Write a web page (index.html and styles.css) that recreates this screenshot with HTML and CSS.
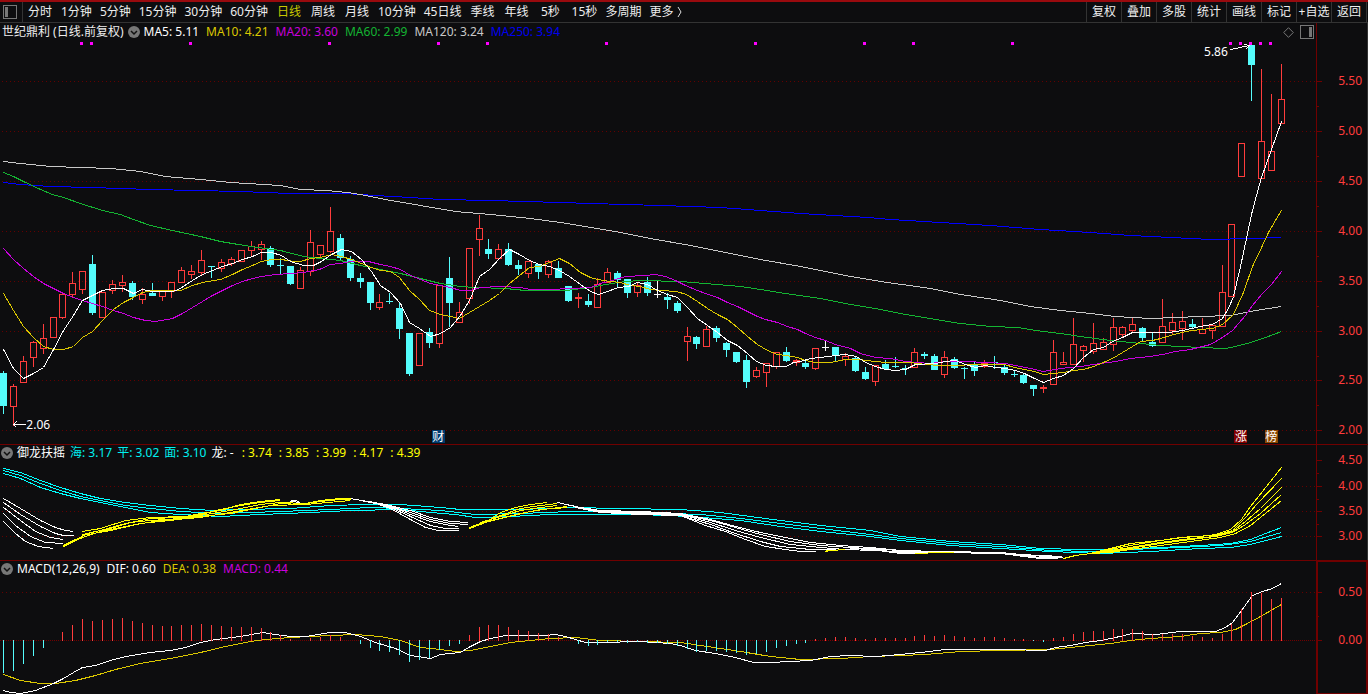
FILE: index.html
```html
<!DOCTYPE html>
<html lang="zh-CN">
<head>
<meta charset="utf-8">
<meta name="viewport" content="width=device-width, initial-scale=1">
<title>世纪鼎利 日线</title>
<link rel="stylesheet" href="styles.css">
</head>
<body>
<header class="toolbar">
  <button class="layout-btn" type="button" aria-label="侧栏"><svg width="14" height="14" viewBox="0 0 14 14"><rect x=".5" y=".5" width="13" height="13" fill="none" stroke="#777"/><rect x="2" y="2" width="3" height="10" fill="#777"/></svg></button>
  <nav class="periods">
    <button type="button">分时</button>
    <button type="button">1分钟</button>
    <button type="button">5分钟</button>
    <button type="button">15分钟</button>
    <button type="button">30分钟</button>
    <button type="button">60分钟</button>
    <button type="button" class="active">日线</button>
    <button type="button">周线</button>
    <button type="button">月线</button>
    <button type="button">10分钟</button>
    <button type="button">45日线</button>
    <button type="button">季线</button>
    <button type="button">年线</button>
    <button type="button">5秒</button>
    <button type="button">15秒</button>
    <button type="button">多周期</button>
    <button type="button" class="more">更多<svg width="6" height="12" viewBox="0 0 6 12"><path d="M1 1L4 6L1 11" fill="none" stroke="#ddd"/></svg></button>
  </nav>
  <div class="actions">
    <button type="button">复权</button>
    <button type="button">叠加</button>
    <button type="button">多股</button>
    <button type="button">统计</button>
    <button type="button">画线</button>
    <button type="button">标记</button>
    <button type="button">+自选</button>
    <button type="button">返回</button>
  </div>
</header>

<main>
  <section class="panel">
    <div class="body">
      <div class="legend legend-main">
        <h1>世纪鼎利 (日线.前复权)</h1>
        <button class="fold" type="button" aria-label="展开"><svg width="12" height="12" viewBox="0 0 12 12"><circle cx="6" cy="6" r="6" fill="#777"/><path d="M3 5L6 8L9 5" fill="none" stroke="#111" stroke-width="1.5"/></svg></button>
        <div class="values">
          <span class="white">MA5: 5.11</span>
          <span class="gold">MA10: 4.21</span>
          <span class="purple">MA20: 3.60</span>
          <span class="green">MA60: 2.99</span>
          <span class="silver">MA120: 3.24</span>
          <span class="blue">MA250: 3.94</span>
        </div>
        <div class="tools">
          <button type="button" aria-label="标注"><svg width="11" height="11" viewBox="0 0 11 11"><path d="M5.5 .7L10.3 5.5L5.5 10.3L.7 5.5Z" fill="none" stroke="#777"/></svg></button>
          <button type="button" aria-label="右侧栏"><svg width="14" height="14" viewBox="0 0 14 14"><rect x=".5" y=".5" width="13" height="13" fill="none" stroke="#777"/><rect x="9" y="2" width="3" height="10" fill="#777"/></svg></button>
        </div>
      </div>
      <div class="plot">
        <svg id="price" class="chart chart-price" viewBox="0 41 1316 403" preserveAspectRatio="none"></svg>
        <span class="note note-low">2.06</span>
        <span class="note note-high">5.86</span>
        <span class="badge badge-report">财</span>
        <span class="badge badge-rise">涨</span>
        <span class="badge badge-rank">榜</span>
      </div>
    </div>
    <div class="axis"><svg id="price-axis" width="50" height="421" viewBox="1317 23 50 421"></svg></div>
  </section>

  <section class="panel">
    <div class="body">
      <div class="legend">
        <button class="fold" type="button" aria-label="展开"><svg width="12" height="12" viewBox="0 0 12 12"><circle cx="6" cy="6" r="6" fill="#777"/><path d="M3 5L6 8L9 5" fill="none" stroke="#111" stroke-width="1.5"/></svg></button>
        <div class="values values-tight">
          <span class="white">御龙扶摇</span>
          <span class="cyan">海: 3.17</span>
          <span class="cyan">平: 3.02</span>
          <span class="cyan">面: 3.10</span>
          <span class="white">龙: -</span>
        </div>
        <div class="values">
          <span class="yellow">: 3.74</span>
          <span class="yellow">: 3.85</span>
          <span class="yellow">: 3.99</span>
          <span class="yellow">: 4.17</span>
          <span class="yellow">: 4.39</span>
        </div>
      </div>
      <svg id="dragon" class="chart chart-dragon" viewBox="0 461 1316 99" preserveAspectRatio="none"></svg>
    </div>
    <div class="axis"><svg id="dragon-axis" width="50" height="115" viewBox="1317 445 50 115"></svg></div>
  </section>

  <section class="panel panel-last">
    <div class="body">
      <div class="legend">
        <button class="fold" type="button" aria-label="展开"><svg width="12" height="12" viewBox="0 0 12 12"><circle cx="6" cy="6" r="6" fill="#777"/><path d="M3 5L6 8L9 5" fill="none" stroke="#111" stroke-width="1.5"/></svg></button>
        <div class="values">
          <span class="white">MACD(12,26,9)</span>
          <span class="white">DIF: 0.60</span>
          <span class="gold">DEA: 0.38</span>
          <span class="purple">MACD: 0.44</span>
        </div>
      </div>
      <svg id="macd" class="chart chart-macd" viewBox="0 577 1316 117" preserveAspectRatio="none"></svg>
    </div>
    <div class="axis axis-focus"><svg id="macd-axis" width="48" height="131" viewBox="1318 562 48 131"></svg></div>
  </section>
</main>
<script src="chart.js"></script>
</body>
</html>
```
FILE: styles.css
```css
* { box-sizing: border-box; }

body {
  margin: 0;
  background: #0d0d0f;
  color: #eee;
  font: 12px/16px "Noto Sans", "Noto Sans CJK SC", sans-serif;
}

button {
  margin: 0;
  padding: 0;
  border: 0;
  background: none;
  color: inherit;
  font: inherit;
  white-space: nowrap;
}

svg { display: block; }

.toolbar {
  display: flex;
  align-items: stretch;
  height: 23px;
  border-top: 2px solid #990a0e;
  border-bottom: 1px solid #333;
}

.layout-btn {
  display: flex;
  align-items: center;
  padding: 0 5px 0 3px;
  border-right: 1px solid #333;
}

.periods {
  display: flex;
  gap: 8px;
  padding-left: 4px;
}

.periods button { min-width: 26px; }
.periods .active { color: #c8c800; }

.periods .more {
  display: flex;
  align-items: center;
  gap: 4px;
}

.actions {
  display: flex;
  margin-left: auto;
  padding-right: 1px;
  border-left: 1px solid #333;
}

.actions button {
  width: 35px;
  border-right: 1px solid #333;
}

.panel {
  display: grid;
  grid-template-columns: minmax(0, 1fr) 52px;
  border-bottom: 1px solid #700000;
}

.panel-last { border-bottom: 0; }

.axis {
  border-left: 1px solid #700000;
  border-right: 1px solid #333;
}

.axis-focus {
  border: 2px solid #700000;
  border-top-width: 1px;
  border-bottom-width: 1px;
}

.axis text {
  fill: #ff3c3c;
  text-anchor: end;
}

.legend {
  display: flex;
  align-items: center;
  gap: 4px;
  height: 16px;
  padding-left: 1px;
  white-space: nowrap;
}

.legend-main {
  height: 18px;
  padding-left: 2px;
}

.legend h1 {
  margin: 0;
  font-size: 12px;
  font-weight: 400;
}

.values {
  display: flex;
  gap: 7px;
}

.values-tight {
  gap: 5px;
  padding-right: 4px;
}

.tools {
  display: flex;
  align-items: center;
  gap: 6px;
  margin-left: auto;
  padding-right: 2px;
}

.white { color: #fff; }
.gold { color: #dcc800; }
.purple { color: #c800dc; }
.green { color: #14b432; }
.silver { color: #c8c8c8; }
.blue { color: #0000f0; }
.cyan { color: #00f0f0; }
.yellow { color: #ffff00; }

.plot { position: relative; }
.chart { width: 100%; }
.chart-price { height: 403px; }
.chart-dragon { height: 99px; }
.chart-macd { height: 117px; }

.chart * {
  shape-rendering: crispEdges;
  vector-effect: non-scaling-stroke;
}

.grid { stroke: #640000; stroke-dasharray: 1 3; }
.grid-zero { stroke: #700000; stroke-dasharray: 1 1; }
.tick { stroke: #700000; shape-rendering: crispEdges; }

/* Labels lying over the price chart, tied to their candles. */
.note, .badge { position: absolute; }
.note { color: #fff; }
.note-low { left: 2%; top: 376px; }
.note-high { right: 6.7%; top: 3px; }

.badge {
  top: 389px;
  width: 13px;
  height: 13px;
  line-height: 13px;
  text-align: center;
  color: #fff;
}

.badge-report { left: 32.8%; background: #003a6e; }
.badge-rise { left: 93.8%; background: #820000; }
.badge-rank { left: 96.1%; background: #8a4600; }
```
FILE: chart.js
```js
const NS = 'http://www.w3.org/2000/svg';
const STEP = 1278 / 129;
const RED = '#ff3c3c', CYAN = '#54fcfc', WHITE = '#ffffff', GOLD = '#dcc800', YELLOW = '#ffff00';

const xAt = i => Math.round(3 + i * STEP);

function add(svg, name, attrs, text) {
  const el = document.createElementNS(NS, name);
  for (const key in attrs) el.setAttribute(key, attrs[key]);
  if (text) el.textContent = text;
  svg.appendChild(el);
}

function curve(svg, color, points) {
  add(svg, 'polyline', { points, fill: 'none', stroke: color, transform: 'translate(.5 .5)' });
}

function grid(svg, rows) {
  rows.forEach(y => add(svg, 'path', { class: 'grid', d: `M2 ${y + 0.5}H1316` }));
}

function axis(id, labels, minor) {
  const svg = document.getElementById(id);
  labels.forEach(([y, text]) => {
    add(svg, 'path', { class: 'tick', d: `M1317 ${y + 0.5}h5` });
    add(svg, 'text', { x: 1362, y: y + 4 }, text);
  });
  minor.forEach(y => add(svg, 'path', { class: 'tick', d: `M1317 ${y + 0.5}h2` }));
}

/* kind, high, body top, body bottom, low: r hollow rise, s flat rise, c fall, w unchanged */
const candles = `c371 373 406 414,r384 386 406 425,r356 361 382 382,r341 342 357 366,r324 338 348 353,r317 317 337 337,r293 294 317 318,r272 283 294 297,r271 271 289 293,c255 264 313 315,
r292 292 317 317,r280 284 290 293,r275 282 285 291,c281 283 297 300,r288 294 299 303,c283 293 296 296,r291 291 296 300,r282 282 291 297,r267 270 282 282,r265 271 274 278,
r250 260 272 274,c266 266 267 278,r259 262 268 271,r257 259 263 265,r250 250 261 261,r241 246 250 255,r241 244 249 259,c246 248 265 267,c258 265 266 274,c266 266 284 285,
r267 270 288 288,r230 242 271 275,r245 245 254 256,r207 231 251 252,c234 238 258 260,c256 259 278 281,c273 278 282 288,c282 282 303 310,r294 302 307 309,c293 301 302 304,
c303 308 329 339,c333 333 374 376,r333 333 365 365,c328 332 343 348,r285 285 343 347,c257 278 303 327,r302 312 322 322,r248 248 298 303,r215 228 239 255,c239 249 254 259,
r244 249 258 258,c243 249 265 266,c260 265 269 275,r261 261 273 277,c264 264 272 279,r260 261 274 277,c261 268 278 278,c286 286 301 302,s293 297 299 308,c294 301 305 307,
r278 284 307 307,r268 272 282 282,c271 273 280 287,c279 279 293 298,r283 285 292 296,c277 282 293 296,w281 294 295 298,c293 297 300 309,c301 303 311 313,r327 336 341 360,
c336 337 344 349,r326 329 346 346,c326 328 338 342,c342 343 350 357,c352 352 362 363,c355 360 382 388,r367 370 376 377,r363 363 372 386,r352 352 366 368,c347 352 361 362,
s359 360 363 366,c361 363 367 369,r348 348 368 369,w340 347 348 351,c347 347 355 361,r353 356 359 365,c356 358 371 372,c367 372 379 380,r365 365 381 385,c360 364 369 369,
c357 366 367 368,c365 368 369 375,r348 352 367 367,c352 354 356 359,c354 356 370 370,r351 357 374 377,c357 359 368 369,c367 368 369 379,c362 365 371 376,s360 362 367 368,
c356 362 363 369,c365 367 373 375,c370 374 375 377,c373 375 383 384,c385 385 389 396,s385 387 389 393,r340 352 384 384,r352 362 364 364,r318 344 364 364,r345 346 350 361,
r323 343 351 353,r338 342 349 349,r318 327 344 350,r326 327 334 337,r317 324 330 332,c327 328 338 342,c332 342 346 347,r299 326 342 342,r313 322 330 333,r311 321 328 339,
c319 324 327 328,r318 329 333 333,r325 325 330 338,r265 292 326 326,r224 224 296 296,r143 143 176 176,c45 45 65 101,r69 141 178 178,r94 151 170 170,r64 99 123 123`.split(',');

const price = document.getElementById('price');
grid(price, [81, 131, 181, 231, 281, 331, 380, 430]);

candles.forEach((entry, i) => {
  const row = entry.trim(), kind = row[0], x = xAt(i);
  const [high, top, bottom, low] = row.slice(1).split(' ').map(Number);
  if (kind === 'r') {
    add(price, 'path', { d: `M${x + 0.5} ${high}V${top}M${x + 0.5} ${bottom + 1}V${low + 1}`, stroke: RED });
    add(price, 'rect', { x: x - 2.5, y: top + 0.5, width: 6, height: Math.max(bottom - top, 2), fill: 'none', stroke: RED });
  } else {
    const fill = { s: RED, c: CYAN, w: WHITE }[kind];
    add(price, 'rect', { x, y: high, width: 1, height: low - high, fill });
    add(price, 'rect', { x: x - 3, y: top, width: 7, height: bottom - top, fill });
  }
});

curve(price, '#0000ff', '3,182 20,184 50,186 90,187 150,189 240,191 290,193 345,193 375,195 410,197 440,199 490,200 560,202 590,203 660,205 720,207 760,210 800,213 868,217 890,219 940,222 990,225 1040,229 1090,232 1130,235 1170,237 1210,239 1250,238 1281,237');
curve(price, '#c8c8c8', '3,161 20,163 50,166 110,168 140,171 165,176 200,179 230,182 280,185 300,189 326,190 347,192 365,195 390,200 420,205 455,211 490,214 530,218 560,222 590,227 620,232 650,238 690,245 720,251 760,259 800,266 830,272 850,276 880,281 930,288 960,294 1000,300 1030,306 1060,310 1090,313 1115,316 1150,318 1175,317 1200,316 1230,315 1255,310 1281,306');
curve(price, '#14b432', '3,172 13,176 23,181 40,189 52,194 63,197 80,203 102,210 120,214 133,219 150,225 172,230 200,236 220,241 250,246 280,250 303,256 320,258 340,260 360,265 380,269 400,273 420,278 440,283 460,286 475,287 505,288 525,290 565,290 590,287 605,284 625,281 640,280 680,281 705,283 740,286 760,289 785,293 820,298 850,304 880,309 905,314 935,319 960,323 990,326 1018,327 1035,330 1060,333 1080,336 1110,340 1140,343 1160,345 1200,347 1225,348 1235,346 1250,342 1265,337 1281,331');
curve(price, '#c800dc', '3,248 13,259 23,268 33,276 43,283 53,288 63,293 73,297 82,300 102,306 113,310 123,313 133,317 145,320 155,321 172,318 182,313 192,307 202,301 212,295 222,290 232,285 242,281 252,278 261,276 275,274 290,273 303,272 319,269 330,264 340,263 350,261 368,261 380,264 390,266 400,269 410,275 420,279 430,283 440,285 450,287 460,290 470,290 480,287 500,286 520,287 530,289 550,289 570,288 590,287 600,283 615,279 625,276 645,275 655,274 665,276 675,280 685,285 697,290 705,293 717,297 727,302 737,306 747,311 757,316 765,319 777,322 787,326 797,329 805,333 815,337 825,340 835,344 850,348 860,353 875,357 890,358 905,361 930,363 945,361 965,361 1005,363 1015,365 1030,368 1043,371 1060,368 1080,366 1100,363 1115,361 1130,358 1150,356 1162,354 1175,351 1190,349 1210,344 1222,337 1232,330 1245,315 1252,305 1262,293 1271,284 1281,271');
curve(price, GOLD, '3,293 13,310 23,326 33,337 43,346 53,349 63,349 73,346 82,337 92,331 102,320 113,309 123,302 133,297 142,292 152,290 180,290 192,285 202,282 220,279 232,274 242,269 252,265 261,261 271,259 281,259 293,261 300,261 310,258 320,257 331,254 341,256 351,259 361,263 371,267 380,270 390,271 399,277 409,290 419,299 429,310 440,314 450,316 459,318 469,312 479,306 489,300 499,293 509,283 519,275 529,267 539,266 549,262 559,258 569,263 580,272 590,277 597,279 610,281 620,282 630,285 640,286 650,289 660,290 676,291 686,294 697,301 707,308 717,314 727,319 737,327 747,336 757,344 767,350 777,354 785,355 797,357 805,360 815,362 830,362 845,359 858,359 875,361 885,362 910,362 925,364 940,365 960,365 970,364 1004,364 1014,367 1024,369 1034,371 1043,374 1053,373 1063,372 1073,370 1083,369 1093,366 1103,362 1112,358 1122,352 1132,346 1140,341 1152,340 1160,338 1170,335 1185,331 1200,329 1212,328 1222,324 1233,314 1243,292 1252,266 1262,245 1268,232 1275,220 1281,210');
curve(price, WHITE, '3,349 13,368 23,378 33,373 43,367 53,349 63,330 73,315 82,300 92,295 102,290 113,288 123,288 133,293 142,289 152,291 172,291 178,289 192,280 202,274 212,270 222,266 232,263 242,259 252,256 261,252 271,252 281,255 290,261 303,265 313,265 321,261 331,254 341,249 351,251 361,259 371,271 380,285 390,292 400,303 409,322 419,328 430,336 440,333 450,327 460,315 470,298 479,276 489,269 499,258 509,249 519,254 529,260 539,264 549,266 559,270 569,276 580,284 590,291 598,294 607,291 618,287 628,286 637,282 647,284 657,290 667,294 677,297 687,307 697,318 707,325 717,332 727,340 737,345 747,353 756,361 766,365 776,366 786,366 793,362 800,361 810,358 820,357 835,355 845,354 856,356 865,362 875,366 885,369 895,370 905,369 915,364 935,363 945,361 955,360 965,364 975,367 985,365 995,367 1005,368 1015,370 1024,373 1034,378 1043,382 1053,378 1063,375 1073,368 1083,357 1093,349 1103,347 1112,341 1122,337 1132,332 1150,332 1168,332 1182,330 1200,326 1212,324 1222,318 1228,308 1233,296 1240,266 1246,238 1251,214 1256,195 1261,177 1271,149 1281,121');

[81, 91, 190, 329, 438, 487, 606, 755, 864, 913, 1012, 1230, 1240, 1250, 1260, 1270]
  .forEach(x => add(price, 'rect', { x: x - 1, y: 42, width: 3, height: 3, fill: '#ff00ff' }));

curve(price, WHITE, '25,424 13,424 16,421');
curve(price, WHITE, '13,424 16,427');
curve(price, WHITE, '1230,49 1249,45 1244,44');
curve(price, WHITE, '1249,45 1245,49');

axis('price-axis', [[81, '5.50'], [131, '5.00'], [181, '4.50'], [231, '4.00'], [281, '3.50'], [331, '3.00'], [380, '2.50'], [430, '2.00']],
  [106, 156, 206, 256, 306, 356, 405]);

const dragon = document.getElementById('dragon');
grid(dragon, [486, 511, 536]);
[
  '3,468 20,472 40,480 60,487 80,493 100,498 125,502 150,505 180,508 212,510 240,509 290,508 330,505 365,504 400,504 440,507 460,509 520,509 570,507 620,508 680,509 720,512 750,516 780,520 820,525 870,530 900,536 950,541 1000,544 1040,548 1080,549 1120,549 1160,547 1200,545 1230,543 1250,539 1265,533 1281,527',
  '3,470 20,475 40,483 60,490 80,496 100,500 125,505 150,508 180,511 220,513 280,511 330,509 370,507 400,508 440,510 475,514 520,513 570,511 640,512 700,514 740,518 780,523 820,528 870,534 900,538 950,543 1000,546 1050,550 1090,551 1130,549 1180,547 1220,545 1250,541 1281,532',
  '3,473 20,478 40,487 60,493 80,498 100,502 125,507 150,512 180,514 220,516 260,514 310,512 350,510 400,509 430,512 455,514 475,517 510,516 550,514 640,514 690,516 740,520 780,526 820,531 870,536 900,540 950,545 1000,548 1050,551 1100,553 1150,551 1200,548 1230,547 1250,544 1281,536'
].forEach(points => curve(dragon, '#00ffff', points));
[
  '3,498 20,508 40,520 55,527 65,530 73,531',
  '3,502 20,514 40,526 55,533 63,535 73,535',
  '3,507 20,520 35,531 50,537 63,539',
  '3,513 15,525 30,536 45,542 63,543',
  '3,521 15,533 25,541 38,546 53,548',
  '290,500 295,500 300,502',
  '290,501 300,502',
  '350,498 385,504 410,510 430,517 450,521 468,522',
  '360,500 390,506 410,512 430,519 450,523 468,524',
  '360,500 390,506 410,514 430,521 450,525 458,526',
  '370,501 390,507 410,516 430,525 445,528 458,528',
  '370,501 390,508 410,519 425,527 438,530 458,530',
  '557,502 580,507 600,510 640,511 680,513 710,519 735,526 760,532 790,538 810,542 840,545 870,547 900,550 940,551 1000,552 1020,554 1062,556',
  '565,504 580,507 600,511 640,512 680,514 710,520 735,527 760,534 790,541 820,545 850,547 900,550 940,552 1000,552 1030,555 1062,557',
  '575,506 600,511 640,513 680,514 710,522 735,530 760,537 790,544 820,547 845,549 900,551 940,552 1000,553 1040,557 1062,557',
  '575,507 600,512 640,513 680,515 710,524 735,533 760,541 780,546 810,549 835,549',
  '575,507 600,512 640,514 680,515 705,525 725,531 745,539 765,546 785,549 800,551 815,551',
  '850,548 870,549 900,552 940,552 1000,553 1040,558 1052,558 1063,557',
  '870,549 900,553 915,553'
].forEach(points => curve(dragon, WHITE, points));
[
  '82,531 100,528 125,520 150,517 185,516 200,513 220,510 240,504 260,501 280,499',
  '82,534 100,530 125,523 150,518 180,517 200,514 220,509 240,505 260,502 280,500',
  '63,545 73,540 90,532 110,528 130,522 150,520 180,518 200,515 230,510 260,504 280,502 305,503 320,500 340,498 350,498',
  '63,546 82,537 100,531 130,525 160,520 200,517 230,512 270,505 305,504 350,500',
  '82,535 110,530 140,523 170,520 200,516 230,513 280,503 300,504 320,501 340,499 350,499',
  '469,528 485,522 500,512 515,507 530,504 547,502',
  '469,527 485,521 500,515 520,508 540,505 557,503',
  '480,522 500,516 520,510 540,507 557,505',
  '480,522 500,518 520,513 540,509 567,507',
  '480,523 500,518 530,511 550,508 567,506',
  '825,551 830,550 845,549',
  '825,550 832,550',
  '915,553 940,552 953,552',
  '1063,558 1075,555 1090,553 1110,548 1130,543 1160,540 1180,537 1200,536 1215,534 1230,529 1241,519 1250,506 1262,491 1281,467',
  '1090,553 1110,549 1130,545 1160,540 1190,536 1215,535 1232,530 1245,517 1256,504 1281,478',
  '1090,553 1110,550 1130,547 1160,542 1190,538 1215,536 1232,531 1245,521 1260,508 1281,487',
  '1090,553 1110,551 1130,548 1160,543 1190,539 1215,536 1232,532 1245,524 1260,513 1281,494',
  '1090,553 1110,552 1130,549 1160,545 1190,541 1220,537 1235,533 1250,525 1281,500'
].forEach(points => curve(dragon, YELLOW, points));

axis('dragon-axis', [[460, '4.50'], [486, '4.00'], [511, '3.50'], [536, '3.00']], [473, 499, 524]);

/* Tip of each histogram bar; 640 is the zero line. */
const bars = [673, 671, 664, 656, 648, 640, 632, 625, 619, 621, 620, 619, 618, 621, 623, 625, 626, 626, 625, 625,
  624, 625, 626, 627, 627, 627, 628, 632, 635, 639, 640, 638, 637, 635, 637, 640, 644, 648, 651, 652,
  655, 662, 660, 658, 650, 646, 644, 635, 627, 625, 625, 627, 630, 631, 633, 634, 637, 640, 644, 646,
  645, 642, 642, 643, 642, 643, 643, 644, 646, 649, 652, 651, 651, 652, 653, 655, 654, 652, 648, 646,
  644, 643, 639, 638, 637, 637, 638, 639, 638, 638, 638, 638, 636, 635, 636, 635, 636, 637, 638, 637,
  637, 638, 639, 639, 641, 642, 638, 637, 634, 632, 631, 631, 629, 629, 629, 631, 634, 634, 634, 634,
  636, 637, 638, 634, 624, 609, 592, 593, 599, 598];

const macd = document.getElementById('macd');
grid(macd, [592]);
add(macd, 'path', { class: 'grid-zero', d: 'M0 640.5H1316' });
curve(macd, GOLD, '3,674 20,680 40,683 55,683 75,680 95,675 115,669 140,663 170,658 200,652 225,646 250,641 265,639 290,637 330,635 355,634 380,636 400,640 420,647 440,649 455,651 470,650 490,646 510,642 530,640 550,638 575,637 600,640 640,641 680,642 700,645 720,648 740,651 770,656 800,659 840,658 870,656 900,655 925,654 960,651 1000,650 1050,649 1080,646 1110,643 1130,640 1150,638 1180,636 1200,633 1220,632 1235,629 1245,624 1260,616 1281,604');
curve(macd, WHITE, '3,690 10,692 20,693 35,690 53,683 63,678 73,672 82,667 95,665 110,660 125,656 150,652 170,650 185,647 200,642 215,639 240,636 262,632 275,634 290,636 305,636 330,632 345,632 360,636 375,642 395,648 410,655 430,658 440,654 460,652 470,646 480,641 490,638 505,635 545,635 555,634 565,636 585,642 600,642 640,641 670,643 680,645 695,650 715,653 735,657 753,662 770,662 810,660 830,656 850,655 875,656 900,654 920,652 945,649 980,649 1020,649 1030,650 1045,650 1055,647 1070,645 1085,642 1100,640 1115,637 1132,633 1155,634 1180,631 1215,631 1225,627 1232,622 1241,610 1252,595 1262,591 1272,588 1281,583');
bars.forEach((tip, i) => {
  if (tip === 640) return;
  add(macd, 'rect', { x: xAt(i), y: Math.min(tip, 640), width: 1, height: Math.abs(tip - 640) + (tip < 640 ? 1 : 0), fill: tip < 640 ? RED : CYAN });
});

axis('macd-axis', [[592, '0.50'], [640, '0.00']], [616]);
```
